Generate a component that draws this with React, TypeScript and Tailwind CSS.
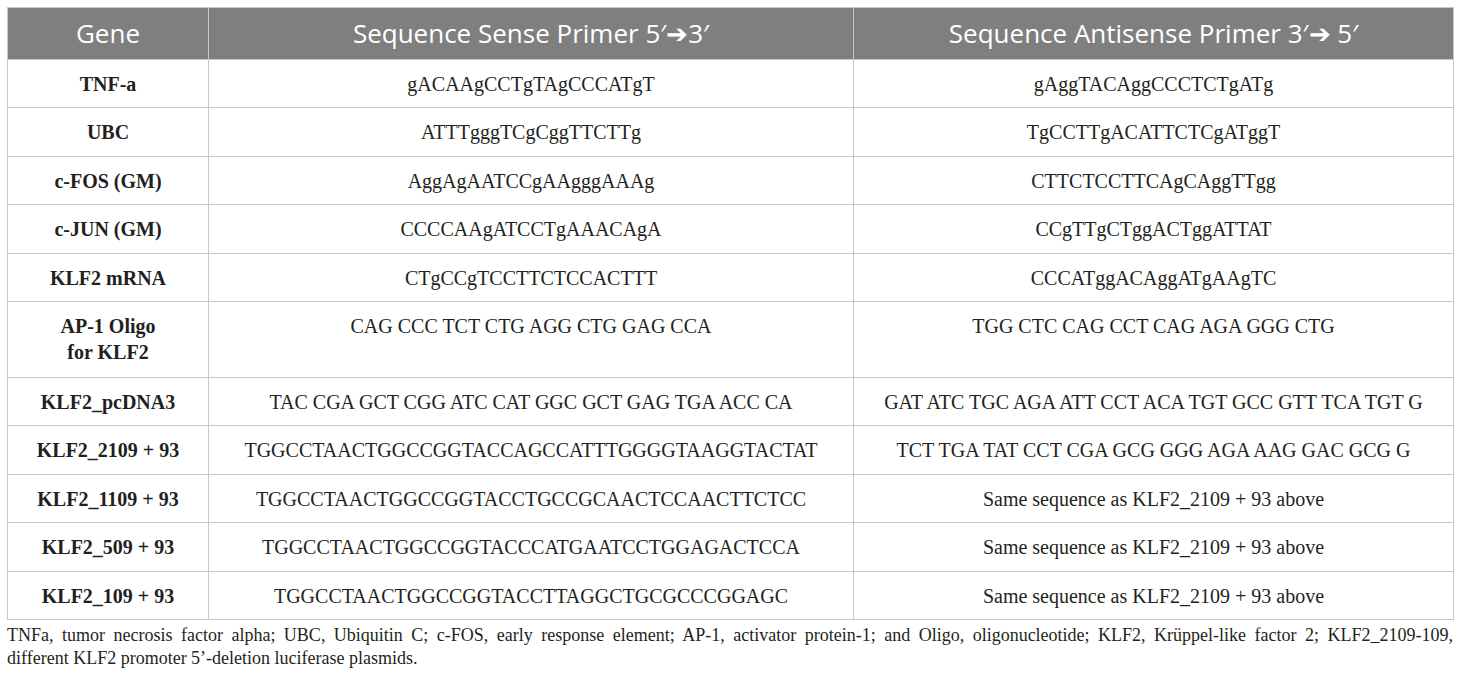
const rows: { gene: string[]; sense: string; anti: string; tall?: boolean }[] = [
  { gene: ['TNF-a'], sense: 'gACAAgCCTgTAgCCCATgT', anti: 'gAggTACAggCCCTCTgATg' },
  { gene: ['UBC'], sense: 'ATTTgggTCgCggTTCTTg', anti: 'TgCCTTgACATTCTCgATggT' },
  { gene: ['c-FOS (GM)'], sense: 'AggAgAATCCgAAgggAAAg', anti: 'CTTCTCCTTCAgCAggTTgg' },
  { gene: ['c-JUN (GM)'], sense: 'CCCCAAgATCCTgAAACAgA', anti: 'CCgTTgCTggACTggATTAT' },
  { gene: ['KLF2 mRNA'], sense: 'CTgCCgTCCTTCTCCACTTT', anti: 'CCCATggACAggATgAAgTC' },
  {
    gene: ['AP-1 Oligo', 'for KLF2'],
    sense: 'CAG CCC TCT CTG AGG CTG GAG CCA',
    anti: 'TGG CTC CAG CCT CAG AGA GGG CTG',
    tall: true,
  },
  {
    gene: ['KLF2_pcDNA3'],
    sense: 'TAC CGA GCT CGG ATC CAT GGC GCT GAG TGA ACC CA',
    anti: 'GAT ATC TGC AGA ATT CCT ACA TGT GCC GTT TCA TGT G',
  },
  {
    gene: ['KLF2_2109 + 93'],
    sense: 'TGGCCTAACTGGCCGGTACCAGCCATTTGGGGTAAGGTACTAT',
    anti: 'TCT TGA TAT CCT CGA GCG GGG AGA AAG GAC GCG G',
  },
  {
    gene: ['KLF2_1109 + 93'],
    sense: 'TGGCCTAACTGGCCGGTACCTGCCGCAACTCCAACTTCTCC',
    anti: 'Same sequence as KLF2_2109 + 93 above',
  },
  {
    gene: ['KLF2_509 + 93'],
    sense: 'TGGCCTAACTGGCCGGTACCCATGAATCCTGGAGACTCCA',
    anti: 'Same sequence as KLF2_2109 + 93 above',
  },
  {
    gene: ['KLF2_109 + 93'],
    sense: 'TGGCCTAACTGGCCGGTACCTTAGGCTGCGCCCGGAGC',
    anti: 'Same sequence as KLF2_2109 + 93 above',
  },
];

export default function App() {
  return (
    <div className="w-[1460px] h-[680px] bg-white pt-[7px] px-[7px] text-[#231f20] font-['Liberation_Serif',serif]">
      <table className="w-[1446px] border-collapse table-fixed">
        <colgroup>
          <col className="w-[201px]" />
          <col className="w-[645px]" />
          <col className="w-[600px]" />
        </colgroup>
        <thead>
          <tr className="h-[52px] bg-[#7f7f7f] text-white font-['Open_Sans',sans-serif] text-[26px]">
            <th className="font-normal border border-[#c8c8c8]">Gene</th>
            <th className="font-normal border border-[#c8c8c8]">Sequence Sense Primer 5′➔3′</th>
            <th className="font-normal border border-[#c8c8c8]">Sequence Antisense Primer 3′➔ 5′</th>
          </tr>
        </thead>
        <tbody className="text-[20px] leading-[26px]">
          {rows.map((r, i) => (
            <tr key={i} className={r.tall ? 'h-[76px]' : 'h-[48.4px]'}>
              <td className="border border-[#c8c8c8] text-center align-top pt-[11px] font-bold">
                {r.gene.map((g, j) => (
                  <div key={j}>{g}</div>
                ))}
              </td>
              <td className="border border-[#c8c8c8] text-center align-top pt-[11px]">{r.sense}</td>
              <td className="border border-[#c8c8c8] text-center align-top pt-[11px]">{r.anti}</td>
            </tr>
          ))}
        </tbody>
      </table>
      <div className="mt-[4px] text-[18px] leading-[23px] w-[1446px]">
        <div className="text-justify [text-align-last:justify]">
          TNFa, tumor necrosis factor alpha; UBC, Ubiquitin C; c-FOS, early response element; AP-1, activator
          protein-1; and Oligo, oligonucleotide; KLF2, Krüppel-like factor 2; KLF2_2109-109,
        </div>
        <div>different KLF2 promoter 5’-deletion luciferase plasmids.</div>
      </div>
    </div>
  );
}
